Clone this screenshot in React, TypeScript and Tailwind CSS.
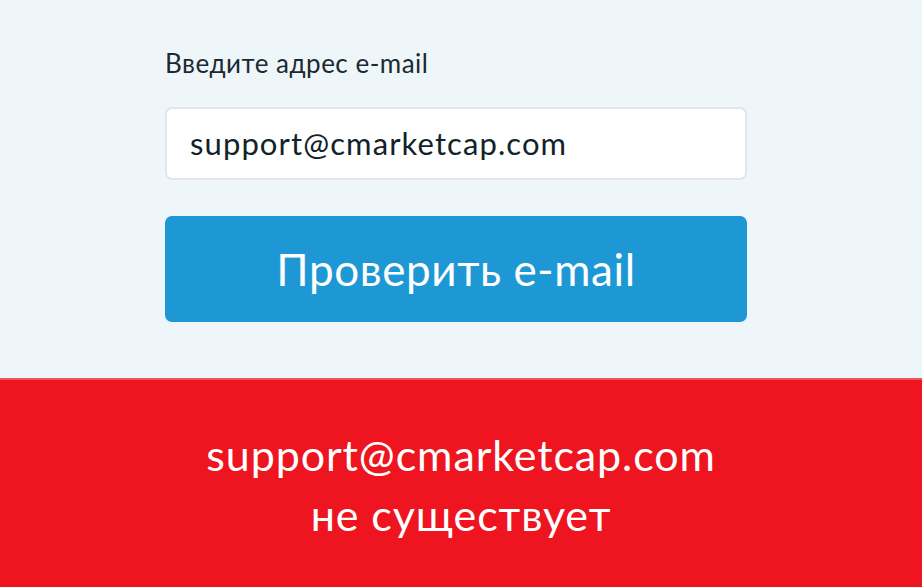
export default function App() {
  return (
    <div className="flex h-[587px] w-[922px] flex-col overflow-hidden" style={{ fontFamily: 'Lato, "Open Sans", sans-serif' }}>
      <div className="h-[378px] bg-[#eff6fa] pl-[165px] pr-[175px] pt-[47px]">
        <label className="block text-[26px] leading-[32px] tracking-[0.5px] text-[#1b2a30]">Введите адрес e-mail</label>
        <div className="mt-[28px] flex h-[73px] items-center rounded-[7px] border-2 border-[#e2e6e8] bg-white pl-[23px] text-[31px] tracking-[1.1px] text-[#112229]">
          support@cmarketcap.com
        </div>
        <button className="mt-[36px] flex h-[106px] w-full items-center justify-center rounded-[7px] bg-[#1e98d5] text-[44px] tracking-[0.6px] text-white">
          Проверить e-mail
        </button>
      </div>
      <div className="flex flex-1 flex-col items-center border-t-2 border-[#f1525a] bg-[#ee1520] pt-[45px] text-[43px] leading-[60px] tracking-[0.9px] text-white">
        <div>support@cmarketcap.com</div>
        <div>не существует</div>
      </div>
    </div>
  )
}
